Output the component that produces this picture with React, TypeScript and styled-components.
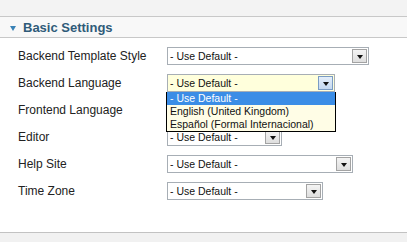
import React from "react";
import styled, { createGlobalStyle } from "styled-components";

const GlobalStyle = createGlobalStyle`
  html, body {
    margin: 0;
    padding: 0;
    background: #ffffff;
  }
  body {
    font-family: "Liberation Sans", Arial, sans-serif;
  }
`;

const Page = styled.div`
  width: 407px;
  height: 242px;
  display: flex;
  flex-direction: column;
  overflow: hidden;
  background: #ffffff;
`;

const TopStrip = styled.div`
  height: 16px;
  background: #f3f3f3;
  border-bottom: 1px solid #c8c8c8;
  flex-shrink: 0;
`;

const Header = styled.div`
  height: 20px;
  background: #f8f8f8;
  border-bottom: 1px solid #c8c8c8;
  display: flex;
  align-items: center;
  gap: 7px;
  padding-left: 10px;
  flex-shrink: 0;
`;

const Toggle = styled.span`
  width: 0;
  height: 0;
  border-left: 3.5px solid transparent;
  border-right: 3.5px solid transparent;
  border-top: 5px solid #3a82b6;
  margin-top: 2px;
`;

const Title = styled.h3`
  margin: 0;
  font-size: 13px;
  font-weight: bold;
  color: #2f5b79;
  line-height: 20px;
  padding-top: 1px;
`;

const Form = styled.div`
  display: flex;
  flex-direction: column;
  gap: 9px;
  padding: 9px 0 0 18px;
`;

const Row = styled.div`
  display: flex;
  align-items: center;
  height: 18px;
`;

const Label = styled.label`
  width: 149px;
  font-size: 12px;
  color: #222222;
`;

const Select = styled.div<{ w: number; focused?: boolean }>`
  position: relative;
  width: ${({ w }) => w}px;
  height: 18px;
  box-sizing: border-box;
  border: 1px solid #a7aeb5;
  background: ${({ focused }) => (focused ? "#ffffdc" : "#ffffff")};
  display: flex;
  align-items: center;
  justify-content: space-between;
  padding: 0 1px 0 2px;
`;

const Value = styled.span<{ covered?: boolean }>`
  font-size: 10.5px;
  color: #111111;
  white-space: nowrap;
  visibility: ${({ covered }) => (covered ? "hidden" : "visible")};
`;

const Arrow = styled.span<{ focused?: boolean }>`
  width: 15px;
  height: 14px;
  box-sizing: border-box;
  border: 1px solid ${({ focused }) => (focused ? "#7a9cc4" : "#a3a3a3")};
  background: ${({ focused }) =>
    focused
      ? "linear-gradient(#e4eefa, #c4d8f0)"
      : "linear-gradient(#f4f4f4, #dedede)"};
  display: flex;
  align-items: center;
  justify-content: center;

  &::after {
    content: "";
    width: 0;
    height: 0;
    border-left: 3.5px solid transparent;
    border-right: 3.5px solid transparent;
    border-top: 4px solid #111111;
    margin-top: 1px;
  }
`;

const Dropdown = styled.ul`
  position: absolute;
  top: 17px;
  left: -2px;
  width: 170px;
  margin: 0;
  padding: 0;
  list-style: none;
  box-sizing: border-box;
  border: 1px solid #000000;
  border-top: none;
  background: #fffde6;
  z-index: 5;
`;

const Option = styled.li<{ active?: boolean }>`
  height: 13px;
  line-height: 13px;
  padding-left: 3px;
  font-size: 10.5px;
  white-space: nowrap;
  color: ${({ active }) => (active ? "#ffffff" : "#111111")};
  background: ${({ active }) => (active ? "#3b8de6" : "transparent")};
`;

const Spacer = styled.div`
  flex: 1;
`;

const Bottom = styled.div`
  height: 9px;
  border-top: 1px solid #c2c2c2;
  background: #f1f1f1;
  flex-shrink: 0;
`;

const rows = [
  { label: "Backend Template Style", width: 202 },
  { label: "Backend Language", width: 168, focused: true },
  { label: "Frontend Language", width: 168, covered: true },
  { label: "Editor", width: 115 },
  { label: "Help Site", width: 186 },
  { label: "Time Zone", width: 156 },
];

const options = [
  "- Use Default -",
  "English (United Kingdom)",
  "Español (Formal Internacional)",
];

export default function App() {
  return (
    <>
      <GlobalStyle />
      <Page>
        <TopStrip />
        <Header>
          <Toggle />
          <Title>Basic Settings</Title>
        </Header>
        <Form>
          {rows.map((r) => (
            <Row key={r.label}>
              <Label>{r.label}</Label>
              <Select w={r.width} focused={r.focused}>
                <Value covered={r.covered}>- Use Default -</Value>
                <Arrow focused={r.focused} />
                {r.focused && (
                  <Dropdown>
                    {options.map((o, i) => (
                      <Option key={o} active={i === 0}>
                        {o}
                      </Option>
                    ))}
                  </Dropdown>
                )}
              </Select>
            </Row>
          ))}
        </Form>
        <Spacer />
        <Bottom />
      </Page>
    </>
  );
}
